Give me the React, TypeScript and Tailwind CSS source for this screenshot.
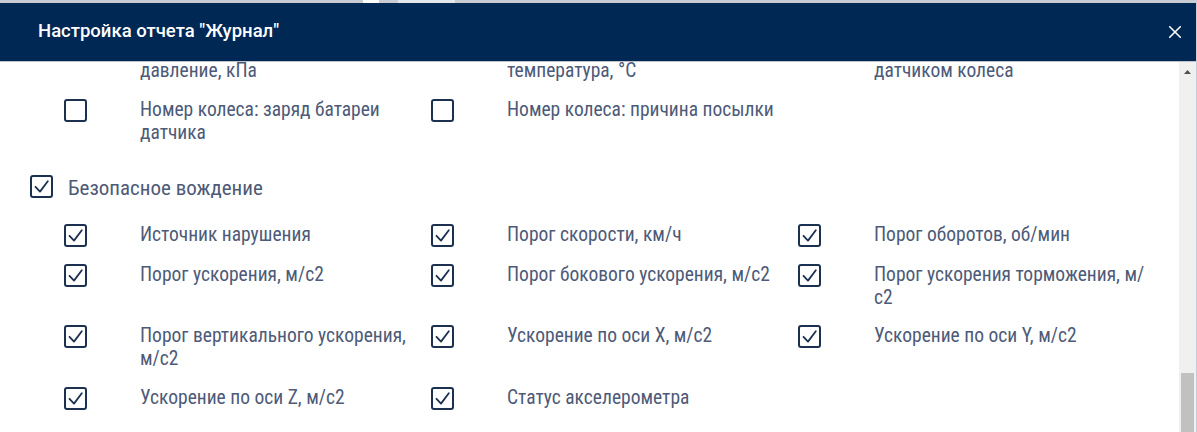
import React from "react";

const FONT = { fontFamily: '"Roboto Condensed", Roboto, "Liberation Sans", sans-serif' };
const TITLE_FONT = { fontFamily: 'Roboto, "Liberation Sans", sans-serif' };

function Box({ checked }: { checked: boolean }) {
  return (
    <div className="w-[23px] h-[23px] shrink-0 border-2 border-[#1c3150] rounded-[3px] bg-white">
      {checked && (
        <svg viewBox="0 0 19 19" className="w-full h-full block">
          <path d="M3.5 9.8 L8 14.6 L15.8 4.2" fill="none" stroke="#1c3150" strokeWidth="1.8" strokeLinecap="round" strokeLinejoin="round" />
        </svg>
      )}
    </div>
  );
}

function Item({ checked, lines }: { checked: boolean; lines: string[] }) {
  return (
    <div className="flex items-start">
      <div className="mt-[1px]">
        <Box checked={checked} />
      </div>
      <div className="ml-[53px] w-[290px] text-[19.5px] leading-[23px] text-[#4d5a78]">
        {lines.map((l, i) => (
          <div key={i} className="whitespace-nowrap">{l}</div>
        ))}
      </div>
    </div>
  );
}

export default function App() {
  const top = [
    { c: false, l: ["Номер колеса: внутреннее", "давление, кПа"] },
    { c: false, l: ["Номер колеса: внутренняя", "температура, °C"] },
    { c: false, l: ["Номер колеса: связь с", "датчиком колеса"] },
    { c: false, l: ["Номер колеса: заряд батареи", "датчика"] },
    { c: false, l: ["Номер колеса: причина посылки"] },
  ];
  const safe = [
    ["Источник нарушения"],
    ["Порог скорости, км/ч"],
    ["Порог оборотов, об/мин"],
    ["Порог ускорения, м/с2"],
    ["Порог бокового ускорения, м/с2"],
    ["Порог ускорения торможения, м/", "с2"],
    ["Порог вертикального ускорения,", "м/с2"],
    ["Ускорение по оси X, м/с2"],
    ["Ускорение по оси Y, м/с2"],
    ["Ускорение по оси Z, м/с2"],
    ["Статус акселерометра"],
  ];
  return (
    <div className="w-[1197px] h-[432px] overflow-hidden bg-[#c9cdd3] flex flex-col" style={FONT}>
      <div className="h-[3px] shrink-0 flex">
        <div className="w-[363px]" />
        <div className="w-[16px] bg-white" />
        <div className="w-[19px]" />
        <div className="w-[57px] bg-[#e4e7eb]" />
      </div>
      <div className="flex-1 flex min-h-0">
        <div className="w-[1196px] flex flex-col bg-white">
          <div className="h-[58px] shrink-0 bg-[#002855] flex items-center justify-between pl-[38px] pr-[15px]">
            <div className="text-white text-[18.5px] font-medium" style={TITLE_FONT}>Настройка отчета "Журнал"</div>
            <svg viewBox="0 0 12 12" className="w-[12px] h-[12px]">
              <path d="M0.7 0.7 L11.3 11.3 M11.3 0.7 L0.7 11.3" stroke="white" strokeWidth="1.6" strokeLinecap="round" />
            </svg>
          </div>
          <div className="h-[1px] shrink-0 bg-[#bfc4ca]" />
          <div className="flex-1 flex min-h-0">
            <div className="flex-1 overflow-hidden">
              <div className="mt-[-26px]">
                <div className="ml-[64px] grid grid-cols-[367px_367px_367px] gap-y-[16px]">
                  {top.map((t, i) => (
                    <Item key={i} checked={t.c} lines={t.l} />
                  ))}
                </div>
                <div className="mt-[31px] pl-[30px] flex items-start">
                  <Box checked />
                  <div className="ml-[15px] mt-[1px] text-[21px] leading-[24px] text-[#4d5a78]">Безопасное вождение</div>
                </div>
                <div className="mt-[23px] ml-[64px] grid grid-cols-[367px_367px_367px] gap-y-[15.5px]">
                  {safe.map((l, i) => (
                    <Item key={i} checked lines={l} />
                  ))}
                </div>
              </div>
            </div>
            <div className="w-[17px] shrink-0 bg-[#f0f0f0] flex flex-col items-center">
              <svg viewBox="0 0 7 4" className="w-[7px] h-[4px] mt-[8px]">
                <path d="M0 4 L3.5 0 L7 4 Z" fill="#505050" />
              </svg>
              <div className="flex-1" />
              <div className="w-[13px] h-[59px] bg-[#c1c1c1]" />
            </div>
          </div>
        </div>
        <div className="flex-1 bg-[#c9cdd3]" />
      </div>
    </div>
  );
}
